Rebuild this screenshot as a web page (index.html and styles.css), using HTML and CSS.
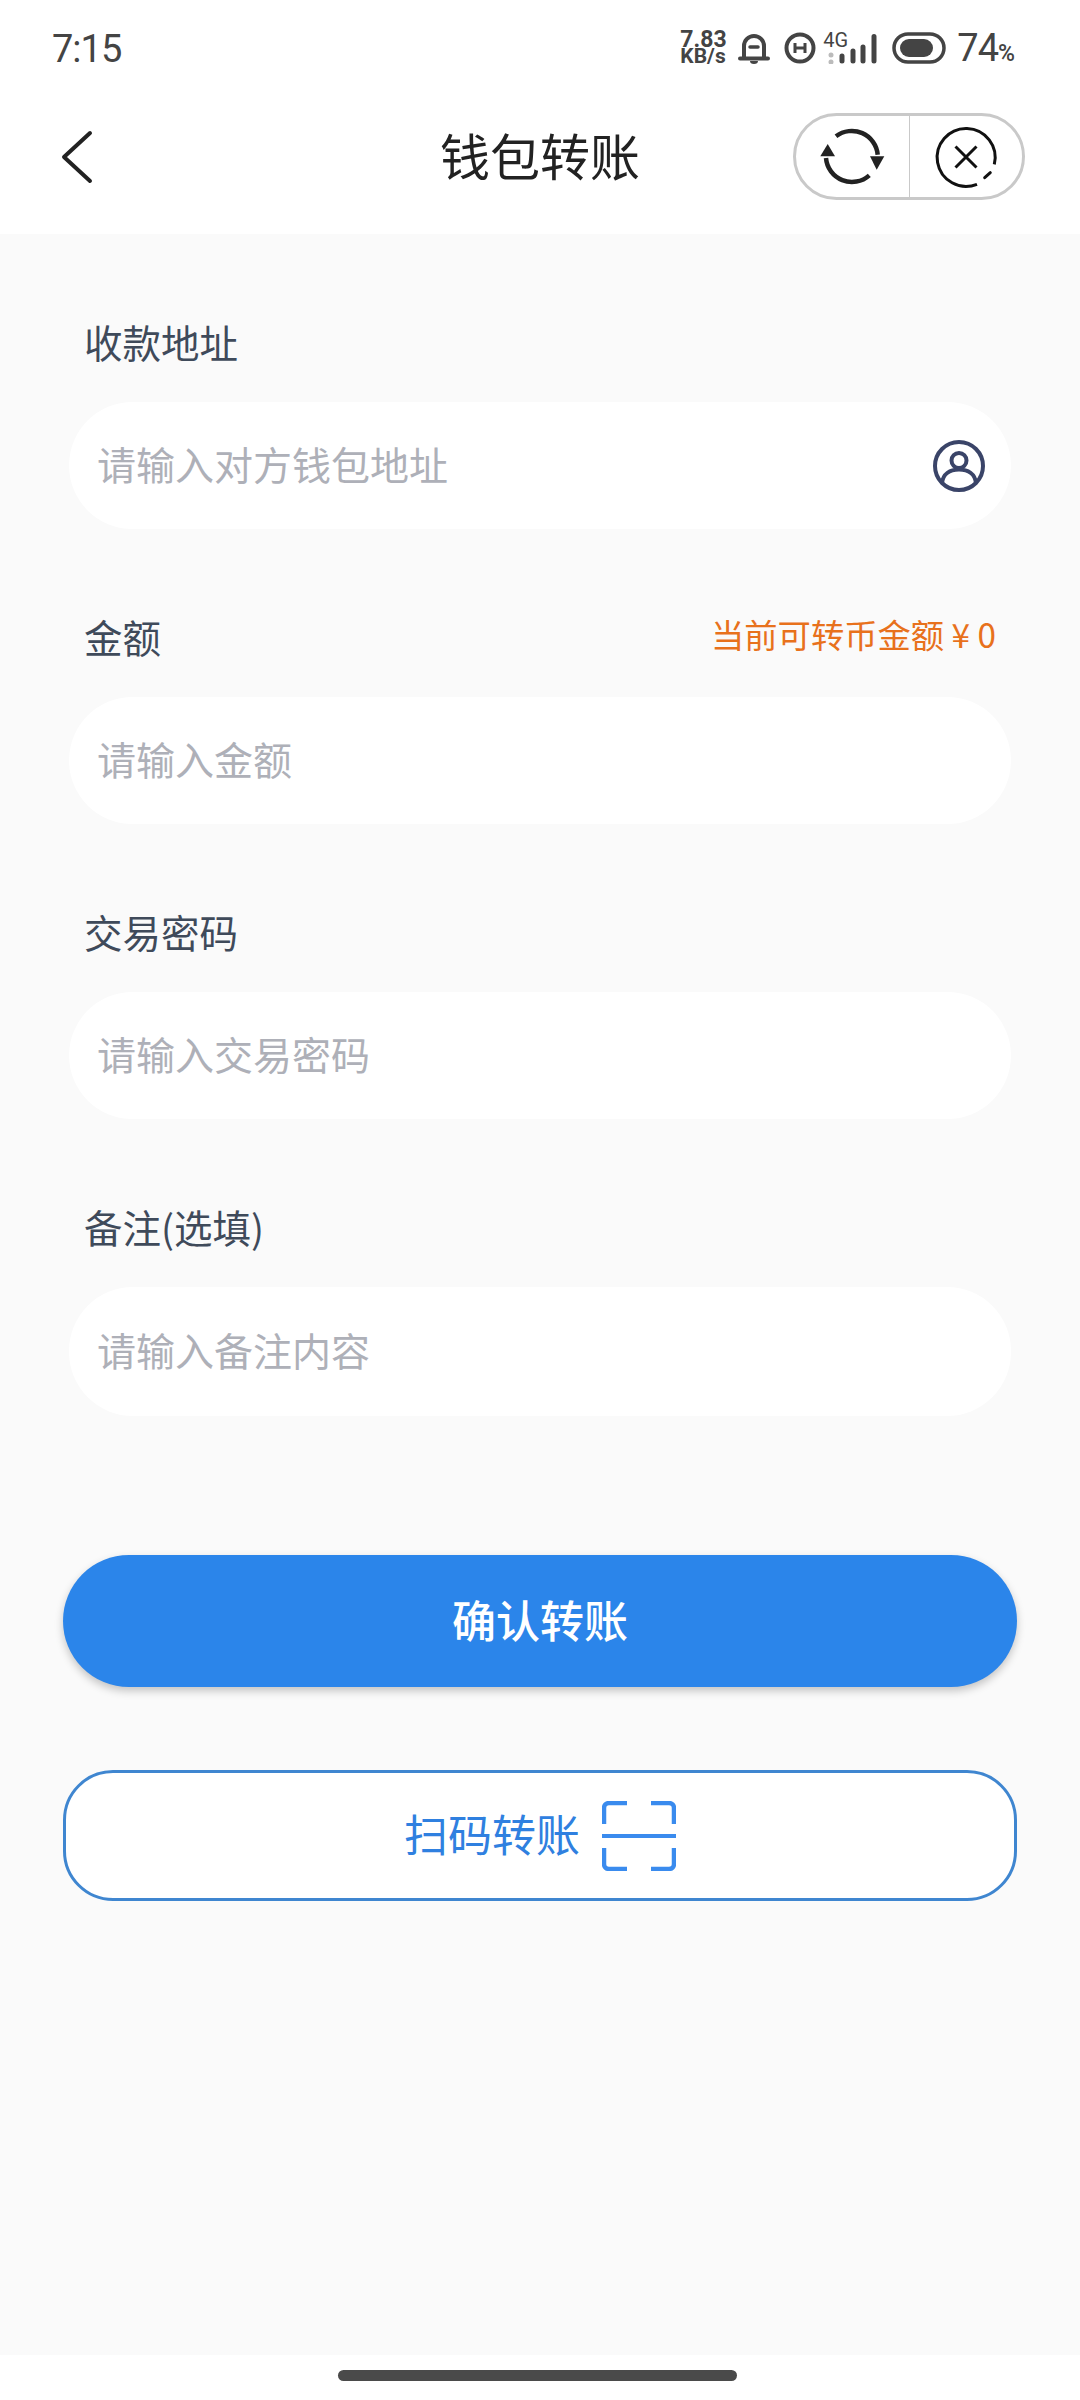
FILE: index.html
```html
<!DOCTYPE html>
<html lang="zh-CN">
  <head>
    <meta charset="UTF-8" />
    <meta name="viewport" content="width=device-width, initial-scale=1.0" />
    <title>钱包转账</title>
    <link rel="stylesheet" href="styles.css">
  </head>
  <body>
    <div class="status-bar">
      <span class="clock">7:15</span>
      <div class="status-icons">
        <div class="speed">7.83<br />KB/s</div>
        <svg class="icon-bell" width="32" height="32" viewBox="0 0 32 32">
          <path d="M6 26V14a10 10 0 0 1 20 0v12" fill="none" stroke="#444" stroke-width="4" />
          <path d="M2 26.500h28" stroke="#444" stroke-width="4" stroke-linecap="round" />
          <path d="M12 29h8a4 3 0 0 1-8 0z" fill="#444" />
          <path d="M12 15h8" stroke="#444" stroke-width="3.500" stroke-linecap="round" />
        </svg>
        <svg class="icon-hd" width="32" height="32" viewBox="0 0 32 32">
          <circle cx="16" cy="16" r="13.500" fill="none" stroke="#444" stroke-width="4" />
          <path d="M11 11v10M21 11v10M11 16h10" fill="none" stroke="#444" stroke-width="3" />
        </svg>
        <div class="signal">
          <span class="net">4G</span>
          <svg width="50" height="32" viewBox="0 0 50 32">
            <circle cx="3" cy="23" r="2.500" fill="#bbb" />
            <circle cx="3" cy="30" r="2.500" fill="#bbb" />
            <path d="M14 24v5M25 19v10M35 15v14M46 4.500v24.500" fill="none" stroke="#444" stroke-width="5" stroke-linecap="round" />
          </svg>
        </div>
        <svg class="icon-battery" width="54" height="32" viewBox="0 0 54 32">
          <rect x="2" y="2" width="50" height="28" rx="14" fill="none" stroke="#444" stroke-width="3.500" />
          <rect x="8" y="7" width="33" height="18" rx="9" fill="#444" />
        </svg>
        <span class="level">74<small>%</small></span>
      </div>
    </div>

    <header class="top-bar">
      <a class="back">
        <svg width="34" height="54" viewBox="0 0 34 54">
          <path d="M30 3L4 27l26 24" fill="none" stroke="#222" stroke-width="4" stroke-linecap="round" stroke-linejoin="round" />
        </svg>
      </a>
      <h1>钱包转账</h1>
      <div class="capsule">
        <button class="capsule-btn">
          <svg width="70" height="70" viewBox="0 0 70 70">
            <path d="M19 14.300A26 26 0 0 1 60.700 32.700" fill="none" stroke="#222" stroke-width="4.500" />
            <path d="M59.700 47.700L53 34.300h14.300z" fill="#222" />
            <path d="M52.300 53.300A26 26 0 0 1 9 36" fill="none" stroke="#222" stroke-width="4.500" />
            <path d="M10.700 22L3.300 34.300H18z" fill="#222" />
          </svg>
        </button>
        <button class="capsule-btn">
          <svg width="70" height="70" viewBox="0 0 70 70">
            <path d="M63.300 42.300A29 29 0 1 0 46 62.300" fill="none" stroke="#111" stroke-width="3" />
            <path d="M59.300 50.700L53.700 55.700" fill="none" stroke="#111" stroke-width="3" stroke-linecap="round" />
            <path d="M24.500 24.500l21 21M45.500 24.500l-21 21" fill="none" stroke="#111" stroke-width="3" />
          </svg>
        </button>
      </div>
    </header>

    <main class="content">
      <div class="field">
        <div class="field-head"><label>收款地址</label></div>
        <div class="input-box">
          <span class="placeholder">请输入对方钱包地址</span>
          <svg width="54" height="54" viewBox="0 0 54 54">
            <circle cx="27" cy="27" r="24" fill="none" stroke="#3a4468" stroke-width="4" />
            <circle cx="27" cy="21.500" r="7.500" fill="none" stroke="#3a4468" stroke-width="4" />
            <path d="M10 44c1-9 8-13.500 17-13.500S43 35 44 44" fill="none" stroke="#3a4468" stroke-width="4" />
          </svg>
        </div>
      </div>

      <div class="field">
        <div class="field-head">
          <label>金额</label>
          <span class="balance">当前可转币金额 ¥ 0</span>
        </div>
        <div class="input-box"><span class="placeholder">请输入金额</span></div>
      </div>

      <div class="field">
        <div class="field-head"><label>交易密码</label></div>
        <div class="input-box"><span class="placeholder">请输入交易密码</span></div>
      </div>

      <div class="field field-note">
        <div class="field-head"><label>备注(选填)</label></div>
        <div class="input-box"><span class="placeholder">请输入备注内容</span></div>
      </div>

      <div class="actions">
        <button class="btn-primary"><span>确认转账</span></button>
        <button class="btn-outline">
          <span>扫码转账</span>
          <svg width="74" height="70" viewBox="0 0 74 70">
            <path d="M2 23V7a5 5 0 0 1 5-5h18M49 2h18a5 5 0 0 1 5 5v16M2 47v16a5 5 0 0 0 5 5h18M49 68h18a5 5 0 0 0 5-5V47" fill="none" stroke="#3a8bee" stroke-width="4.500" />
            <path d="M0 35h74" stroke="#3a8bee" stroke-width="4" />
          </svg>
        </button>
      </div>
    </main>

    <div class="nav-bar"><span class="home-bar"></span></div>
  </body>
</html>
```

FILE: styles.css
```css
* {
  box-sizing: border-box;
}

body {
  margin: 0;
  width: 1080px;
  height: 2400px;
  display: flex;
  flex-direction: column;
  background: #fff;
  font-family: "Noto Sans CJK SC", "Noto Sans", sans-serif;
}

button {
  font-family: inherit;
  padding: 0;
  border: none;
}

/* status bar */
.status-bar {
  height: 92px;
  padding: 0 65px 0 52px;
  display: flex;
  justify-content: space-between;
  align-items: center;
  color: #444;
  font-family: Roboto, sans-serif;
}

.clock {
  font-size: 38px;
  letter-spacing: -1px;
  line-height: 1;
  margin-top: 6px;
}

.status-icons {
  display: flex;
  align-items: center;
  margin-top: 4px;
}

.speed {
  width: 48px;
  margin-right: 10px;
  font-size: 21px;
  font-weight: 700;
  line-height: 17px;
  white-space: nowrap;
}

.speed::first-line {
  font-size: 23px;
}

.icon-bell {
  margin-right: 14px;
}

.icon-hd {
  margin-right: 12px;
}

.signal {
  position: relative;
  width: 50px;
  margin-right: 14px;
}

.signal svg {
  display: block;
}

.net {
  position: absolute;
  left: -5px;
  top: -2px;
  font-size: 20px;
  line-height: 1;
}

.level {
  margin-left: 11px;
  font-size: 38px;
  letter-spacing: -1px;
  line-height: 1;
}

.level small {
  font-size: 23px;
  font-weight: 500;
  letter-spacing: 0;
}

/* title bar */
.top-bar {
  height: 142px;
  padding: 0 55px 13px 60px;
  position: relative;
  display: flex;
  justify-content: space-between;
  align-items: center;
}

.back {
  display: block;
  height: 54px;
}

.top-bar h1 {
  position: absolute;
  left: 0;
  right: 0;
  margin: -5px 0 0;
  text-align: center;
  font-size: 50px;
  font-weight: 400;
  color: #222;
}

.capsule {
  width: 232px;
  height: 87px;
  border: 3px solid #c9c9c9;
  border-radius: 44px;
  display: flex;
}

.capsule-btn {
  flex: 1;
  display: flex;
  justify-content: center;
  align-items: center;
  background: none;
}

.capsule-btn + .capsule-btn {
  border-left: 1px solid #c9c9c9;
}

/* form */
.content {
  flex: 1;
  padding: 80px 69px 0;
  background: #fafafa;
}

.field {
  margin-bottom: 80px;
}

.field-head {
  height: 60px;
  margin-bottom: 28px;
  padding: 0 15px 6px;
  display: flex;
  justify-content: space-between;
  align-items: center;
}

.field-head label {
  font-size: 38.500px;
  color: #3f4a5a;
}

.balance {
  font-size: 33.300px;
  color: #e8711c;
  margin-top: -6px;
}

.input-box {
  height: 127px;
  padding: 0 25px 0 28px;
  background: #fff;
  border-radius: 64px;
  display: flex;
  justify-content: space-between;
  align-items: center;
}

.field-note .input-box {
  height: 129px;
}

.placeholder {
  font-size: 39px;
  color: #aeb0b8;
  margin-top: -6px;
}

.actions {
  margin: 139px -6px 0;
}

.btn-primary,
.btn-outline {
  width: 100%;
  display: flex;
  justify-content: center;
  align-items: center;
  font-size: 44px;
}

.btn-primary {
  height: 132px;
  padding-bottom: 4px;
  background: #2b85ea;
  border-radius: 66px;
  color: #fff;
  font-weight: 500;
  box-shadow: 0 4px 8px rgba(0, 0, 0, 0.22);
}

.btn-outline {
  height: 131px;
  margin-top: 83px;
  gap: 22px;
  background: #fff;
  border: 3px solid #3f86d0;
  border-radius: 50px;
  color: #2f80e0;
}

.btn-outline span {
  margin-top: -6px;
}

/* gesture bar */
.nav-bar {
  height: 45px;
  padding: 15px 6px 0 0;
  display: flex;
  justify-content: center;
  align-items: flex-start;
}

.home-bar {
  width: 399px;
  height: 11px;
  background: #4a4a4a;
  border-radius: 6px;
}
```
